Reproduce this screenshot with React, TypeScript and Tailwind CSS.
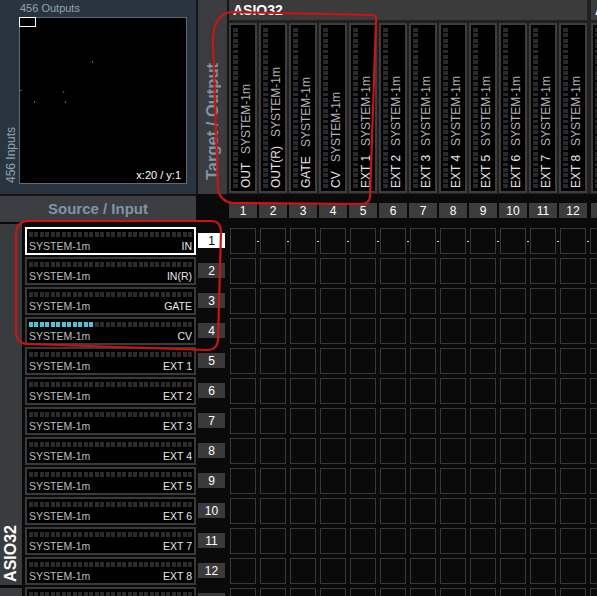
import React from "react";

const OUTS = ["OUT", "OUT(R)", "GATE", "CV", "EXT 1", "EXT 2", "EXT 3", "EXT 4", "EXT 5", "EXT 6", "EXT 7", "EXT 8"];
const INS = ["IN", "IN(R)", "GATE", "CV", "EXT 1", "EXT 2", "EXT 3", "EXT 4", "EXT 5", "EXT 6", "EXT 7", "EXT 8", "EXT 9"];
const LEDS = Array.from({ length: 30 }, (_, i) => i);

function LedRow({ lit }: { lit: number }) {
  return (
    <div className="grid h-[5px] grid-cols-[repeat(30,minmax(0,1fr))] gap-x-[1.5px]">
      {LEDS.map((i) => (
        <div key={i} className={i < lit ? "bg-[#4cc3dc]" : "bg-[#2b2b2b]"} />
      ))}
    </div>
  );
}

function LedCol() {
  return (
    <div className="grid h-full w-[5px] grid-rows-[repeat(30,minmax(0,1fr))] gap-y-[1.5px]">
      {LEDS.map((i) => (
        <div key={i} className="bg-[#2a2a2a]" />
      ))}
    </div>
  );
}

function OutputColumn({ name }: { name?: string }) {
  return (
    <div className="flex h-[170px] w-[28px] shrink-0 border-2 border-[#3d3d3d] bg-black py-[3px] pl-[2px]">
      <LedCol />
      {name && (
        <div className="ml-[2px] rotate-180 whitespace-nowrap text-[12px] leading-[12px] [writing-mode:vertical-rl]">
          <span className="text-[#e4e4e4]">{name}</span>
          <span className="ms-[9px] text-[#b4b4b4]">SYSTEM-1m</span>
        </div>
      )}
    </div>
  );
}

function OutputGroup({ title, names }: { title: string; names: (string | undefined)[] }) {
  return (
    <div className="flex w-[358px] shrink-0 flex-col">
      <div className="h-[20px] bg-[#3b3b3b] pl-[4px] text-[14px] font-bold leading-[20px] text-white">{title}</div>
      <div className="mt-[3px] flex gap-[2px]">
        {names.map((n, i) => (
          <OutputColumn key={i} name={n} />
        ))}
      </div>
    </div>
  );
}

function Overview() {
  return (
    <div className="flex w-[196px] shrink-0 flex-col bg-[#2a343e] pl-[3px] pt-[2px]">
      <div className="pl-[17px] text-[11px] leading-[13px] text-[#8ea3b1]">456 Outputs</div>
      <div className="mt-[2px] flex">
        <div className="flex w-[16px] items-end justify-center pb-[1px]">
          <span className="rotate-180 whitespace-nowrap text-[12px] leading-[12px] text-[#8ea3b1] [writing-mode:vertical-rl]">
            456 Inputs
          </span>
        </div>
        <div className="relative h-[167px] w-[168px] border border-[#5f6973] bg-black">
          <div className="absolute left-[-1px] top-[-1px] h-[10px] w-[17px] border border-white" />
          <div className="absolute left-[72px] top-[43px] h-[2px] w-px bg-[#666]" />
          <div className="absolute left-[0px] top-[72px] h-px w-[2px] bg-[#555]" />
          <div className="absolute left-[43px] top-[73px] h-[2px] w-px rotate-[-45deg] bg-[#666]" />
          <div className="absolute left-[14px] top-[83px] h-[2px] w-px bg-[#666]" />
          <div className="absolute left-[45px] top-[83px] h-[2px] w-px bg-[#666]" />
          <span className="absolute bottom-[2px] right-[5px] text-[11px] leading-none text-white">x:20 / y:1</span>
        </div>
      </div>
    </div>
  );
}

function InputRow({ index, name }: { index: number; name: string }) {
  const selected = index === 0;
  return (
    <div className="flex h-[30px] shrink-0">
      <div
        className={`flex h-[28px] w-[171px] shrink-0 flex-col border-2 bg-black px-[2px] pt-[3px] ${
          selected ? "border-white" : "border-[#3a3a3a]"
        }`}
      >
        <LedRow lit={index === 3 ? 12 : 0} />
        <div className="mt-[3px] flex justify-between text-[10.5px] leading-[12px]">
          <span className="text-[#bdbdbd]">SYSTEM-1m</span>
          <span className="text-[#e8e8e8]">{name}</span>
        </div>
      </div>
      <div className="w-[2px] shrink-0" />
      <div
        className={`mt-[6px] flex h-[15px] w-[27px] shrink-0 items-center justify-center text-[12px] ${
          selected ? "bg-white text-black" : "bg-[#3a3a3a] text-white"
        }`}
      >
        {index + 1}
      </div>
      <div className="w-[4px] shrink-0" />
      <div className="flex">
        {Array.from({ length: 13 }, (_, c) => (
          <div key={c} className="flex h-[30px] w-[30px] shrink-0 pl-px pt-px">
            <div className="h-[26px] w-[26px] border border-[#383838]" />
            {selected && <div className="ml-px mt-[13px] h-px w-[2px] bg-[#d8d8d8]" />}
          </div>
        ))}
      </div>
    </div>
  );
}

export default function App() {
  return (
    <div className="relative h-[596px] w-[597px] overflow-hidden bg-[#0a0a0a] font-['Liberation_Sans',Arial,sans-serif]">
      {/* Top band: overview + output headers */}
      <div className="flex h-[194px]">
        <Overview />
        <div className="w-[2px] shrink-0 bg-[#151515]" />
        <div className="flex w-[29px] shrink-0 items-end justify-center bg-[#3a3c3f] pb-[14px]">
          <span className="rotate-180 whitespace-nowrap text-[16.5px] font-bold leading-none text-[#7e95a4] [writing-mode:vertical-rl]">
            Target / Output
          </span>
        </div>
        <div className="w-[2px] shrink-0 bg-[#151515]" />
        <div className="flex flex-1 gap-[4px] overflow-hidden bg-[#202020]">
          <OutputGroup title="ASIO32" names={OUTS} />
          <OutputGroup title="A" names={[undefined]} />
        </div>
      </div>

      {/* Middle band: source header + column numbers */}
      <div className="flex h-[29px]">
        <div className="flex w-[196px] shrink-0 flex-col">
          <div className="h-[2px] bg-[#151515]" />
          <div className="flex h-[26px] items-center justify-center bg-[#3c3e41] text-[15px] font-bold text-[#7e95a4]">
            Source / Input
          </div>
        </div>
        <div className="w-[33px] shrink-0" />
        <div className="flex gap-[4px] pt-[9px]">
          <div className="flex gap-[2px]">
            {OUTS.map((_, i) => (
              <div
                key={i}
                className="flex h-[15px] w-[28px] shrink-0 items-center justify-center bg-[#3c3c3c] text-[12px] text-white"
              >
                {i + 1}
              </div>
            ))}
          </div>
          <div className="h-[15px] w-[28px] shrink-0 bg-[#3c3c3c]" />
        </div>
      </div>

      {/* Matrix band */}
      <div className="flex">
        <div className="flex w-[22px] shrink-0 flex-col gap-[3px] pt-px">
          <div className="flex h-[361px] items-end justify-center bg-[#393c3f] pb-[3px]">
            <span className="rotate-180 whitespace-nowrap text-[16px] font-bold leading-none text-white [writing-mode:vertical-rl]">
              ASIO32
            </span>
          </div>
          <div className="h-[40px] bg-[#393c3f]" />
        </div>
        <div className="w-[3px] shrink-0" />
        <div className="flex flex-col pt-[4px]">
          {INS.map((n, i) => (
            <InputRow key={i} index={i} name={n} />
          ))}
        </div>
      </div>

      {/* Hand-drawn red markup */}
      <svg className="pointer-events-none absolute inset-0" width="597" height="596" viewBox="0 0 597 596">
        <path
          d="M230 12 L372 15 Q377 15 376 21 L370 197 Q369 204 362 204 L233 203 Q221 202 218 190 L213 44 Q212 16 230 12"
          fill="none"
          stroke="#cf1212"
          strokeWidth="2.2"
          strokeLinejoin="round"
        />
        <path
          d="M27 221 L211 221 Q221 221 221 232 L218 340 Q217 350 207 350 L29 344 Q16 344 16 331 L16 235 Q16 222 27 221"
          fill="none"
          stroke="#cf1212"
          strokeWidth="2.2"
          strokeLinejoin="round"
        />
      </svg>
    </div>
  );
}
